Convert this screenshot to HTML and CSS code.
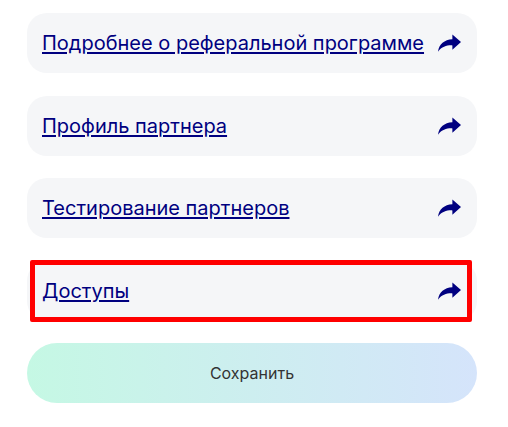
FILE: index.html
```html
<!DOCTYPE html>
<html lang="ru">
<head>
    <meta charset="UTF-8">
    <meta name="viewport" content="width=device-width, initial-scale=1.0">
    <title>Партнёр</title>
    <link rel="stylesheet" href="styles.css">
</head>
<body>
    <div class="links">
        <div class="link-card">
            <a href="#">Подробнее о реферальной программе</a>
            <svg class="share-icon" viewBox="0 0 24 18"><path d="M15 0 L24 8 L15 16 L15 11.5 C9.5 11.2 4 12.8 0 18 C1.2 10.5 6.5 5.6 15 5.2 Z"/></svg>
        </div>
        <div class="link-card">
            <a href="#">Профиль партнера</a>
            <svg class="share-icon" viewBox="0 0 24 18"><path d="M15 0 L24 8 L15 16 L15 11.5 C9.5 11.2 4 12.8 0 18 C1.2 10.5 6.5 5.6 15 5.2 Z"/></svg>
        </div>
        <div class="link-card">
            <a href="#">Тестирование партнеров</a>
            <svg class="share-icon" viewBox="0 0 24 18"><path d="M15 0 L24 8 L15 16 L15 11.5 C9.5 11.2 4 12.8 0 18 C1.2 10.5 6.5 5.6 15 5.2 Z"/></svg>
        </div>
        <div class="link-card highlighted">
            <a href="#">Доступы</a>
            <svg class="share-icon" viewBox="0 0 24 18"><path d="M15 0 L24 8 L15 16 L15 11.5 C9.5 11.2 4 12.8 0 18 C1.2 10.5 6.5 5.6 15 5.2 Z"/></svg>
        </div>
        <button class="save-btn">Сохранить</button>
    </div>
</body>
</html>
```

FILE: styles.css
```css
body {
    margin: 0;
    padding: 13px 0 0 27px;
    background-color: #fff;
    font-family: Inter, "Noto Sans", sans-serif;
}

.links {
    display: flex;
    flex-direction: column;
    gap: 22.5px;
    width: 450px;
}

.link-card {
    position: relative;
    display: flex;
    align-items: center;
    justify-content: space-between;
    gap: 10px;
    height: 60px;
    padding: 0 16px 0 15px;
    background-color: #f5f6f8;
    border-radius: 20px;
    box-sizing: border-box;
}

.link-card a {
    color: #000080;
    font-size: 20px;
    text-decoration: underline;
    text-decoration-thickness: 2px;
    text-underline-offset: 2px;
    white-space: nowrap;
}

.share-icon {
    width: 23px;
    height: 18px;
    fill: #000080;
    flex-shrink: 0;
}

/* red annotation frame */
.highlighted::after {
    content: "";
    position: absolute;
    top: -1px;
    left: 3px;
    right: 5px;
    bottom: -1px;
    border: 5px solid #ff0000;
    border-radius: 2px;
}

.save-btn {
    height: 60px;
    border: none;
    border-radius: 30px;
    background: linear-gradient(to right, #c5f8e4, #d5e4fb);
    color: #333;
    font-family: Inter, "Noto Sans", sans-serif;
    font-size: 16px;
    padding-right: 6px;
    cursor: pointer;
}
```
